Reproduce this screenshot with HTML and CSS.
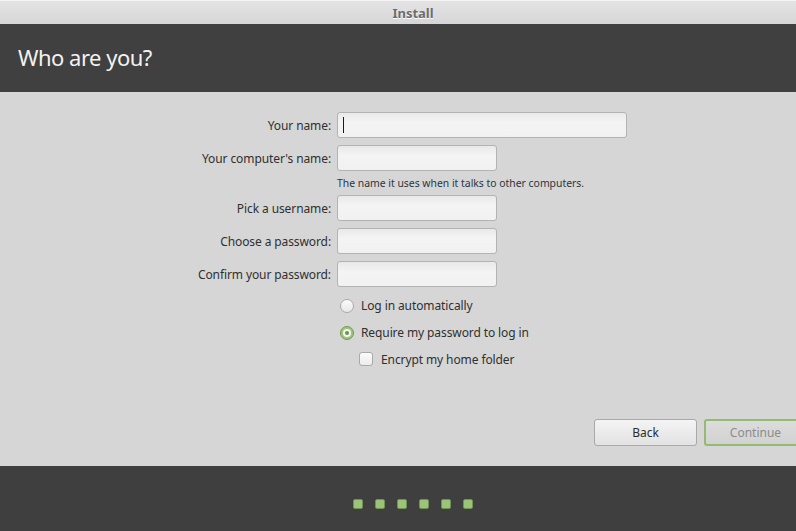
FILE: index.html
```html
<!DOCTYPE html>
<html>
<head>
<meta charset="utf-8">
<title>Install</title>
<link rel="stylesheet" href="styles.css">
</head>
<body>
<div class="window">
  <div class="titlebar"><span class="title">Install</span></div>
  <div class="header"><h1>Who are you?</h1></div>
  <div class="content">
    <div class="form">
      <label class="lbl">Your name:</label>
      <div class="field wide"><span class="caret"></span></div>

      <label class="lbl">Your computer's name:</label>
      <div class="field"></div>

      <span></span>
      <div class="hint">The name it uses when it talks to other computers.</div>

      <label class="lbl">Pick a username:</label>
      <div class="field"></div>

      <label class="lbl">Choose a password:</label>
      <div class="field"></div>

      <label class="lbl">Confirm your password:</label>
      <div class="field"></div>
    </div>

    <div class="options">
      <div class="opt"><span class="radio"></span><span>Log in automatically</span></div>
      <div class="opt"><span class="radio checked"></span><span>Require my password to log in</span></div>
      <div class="opt sub"><span class="check"></span><span>Encrypt my home folder</span></div>
    </div>

    <div class="actions">
      <button class="btn">Back</button>
      <button class="btn primary">Continue</button>
    </div>
  </div>
  <div class="footer">
    <span class="dot"></span><span class="dot"></span><span class="dot"></span><span class="dot"></span><span class="dot"></span><span class="dot"></span>
  </div>
</div>
</body>
</html>
```

FILE: styles.css
```css
html, body {
  margin: 0;
  padding: 0;
  width: 796px;
  height: 531px;
  overflow: hidden;
  font-family: "Noto Sans", "DejaVu Sans", sans-serif;
}

.window {
  display: flex;
  flex-direction: column;
  height: 531px;
  background: #d6d6d6;
}

.titlebar {
  height: 24px;
  flex: none;
  box-sizing: border-box;
  border-top: 1px solid #f4f4f4;
  background: linear-gradient(#e4e4e4, #d6d6d6);
  display: flex;
  align-items: center;
  justify-content: center;
  padding-left: 30px;
}

.title {
  font-size: 13px;
  font-weight: bold;
  color: #6c6c6c;
  text-shadow: 0 1px 0 #ffffff;
}

.header {
  height: 68px;
  flex: none;
  background: #404040;
  display: flex;
  align-items: center;
  padding-left: 18px;
}

.header h1 {
  margin: 0;
  font-weight: normal;
  font-size: 22px;
  color: #f2f2f2;
  letter-spacing: -0.5px;
  padding-bottom: 2px;
}

.content {
  flex: 1;
  display: flex;
  flex-direction: column;
  padding-top: 20px;
  overflow: hidden;
}

.form {
  display: grid;
  grid-template-columns: 331px auto;
  column-gap: 6px;
  row-gap: 7px;
  align-items: center;
  justify-items: start;
}

.lbl {
  justify-self: end;
  font-size: 12px;
  letter-spacing: -0.1px;
  color: #303030;
}

.field {
  width: 160px;
  height: 26px;
  box-sizing: border-box;
  border: 1px solid #b3b3b3;
  border-radius: 3px;
  background: linear-gradient(#e9e9e9, #f4f4f4 40%, #f1f1f1);
  position: relative;
}

.field.wide {
  width: 290px;
}

.caret {
  position: absolute;
  left: 5px;
  top: 4px;
  width: 1px;
  height: 16px;
  background: #1a1a1a;
}

.hint {
  font-size: 10.4px;
  line-height: 10px;
  height: 10px;
  color: #2c3540;
}

.options {
  display: flex;
  flex-direction: column;
  padding-left: 340px;
  margin-top: 5px;
}

.opt {
  display: flex;
  align-items: center;
  height: 27px;
  font-size: 12px;
  letter-spacing: -0.1px;
  color: #303030;
}

.opt.sub {
  padding-left: 19px;
  height: 26px;
}

.radio {
  width: 14px;
  height: 14px;
  box-sizing: border-box;
  border-radius: 50%;
  border: 1px solid #a9a9a9;
  background: linear-gradient(#fbfbfb, #e8e8e8);
  margin-right: 7px;
  flex: none;
  position: relative;
}

.radio.checked {
  border: 1px solid #6f9a4e;
  background: #9fc47e;
}

.radio.checked::after {
  content: "";
  position: absolute;
  left: 2px;
  top: 2px;
  width: 8px;
  height: 8px;
  border-radius: 50%;
  background: #f4f4f4;
}

.radio.checked::before {
  content: "";
  position: absolute;
  left: 4px;
  top: 4px;
  width: 4px;
  height: 4px;
  border-radius: 50%;
  background: #6c8f52;
  z-index: 1;
}

.check {
  width: 14px;
  height: 14px;
  box-sizing: border-box;
  border: 1px solid #a9a9a9;
  border-radius: 3px;
  background: linear-gradient(#fbfbfb, #ececec);
  margin-right: 8px;
  flex: none;
}

.actions {
  margin-top: auto;
  margin-bottom: 20px;
  display: flex;
  gap: 7px;
  padding-left: 594px;
}

.btn {
  flex: none;
  width: 103px;
  height: 27px;
  box-sizing: border-box;
  border: 1px solid #a9a9a9;
  border-radius: 3px;
  background: linear-gradient(#f4f4f4, #e2e2e2);
  font-family: "Noto Sans", "DejaVu Sans", sans-serif;
  font-size: 12px;
  color: #2c2c2c;
  padding: 0;
}

.btn.primary {
  border: 2px solid #93bb73;
  background: linear-gradient(#dcdcdc, #d2d2d2);
  color: #8c8c8c;
}

.footer {
  height: 65px;
  flex: none;
  background: #3f3f3f;
  display: flex;
  align-items: center;
  justify-content: center;
  gap: 12px;
  padding-left: 29px;
  padding-top: 11px;
  box-sizing: border-box;
}

.dot {
  width: 10px;
  height: 10px;
  box-sizing: border-box;
  border: 1px solid #6f9350;
  border-radius: 2px;
  background: #9cc37a;
}
```
